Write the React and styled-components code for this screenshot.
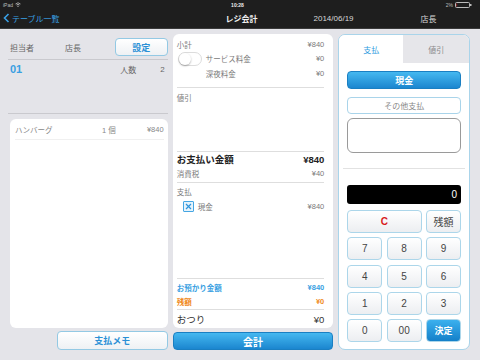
import React from "react";
import styled, { createGlobalStyle } from "styled-components";

const GlobalStyle = createGlobalStyle`
  html, body { margin: 0; padding: 0; }
  body {
    background: #e4e4e9;
    font-family: "Liberation Sans", "Noto Sans CJK JP", sans-serif;
  }
  * { box-sizing: border-box; }
`;

const Page = styled.div`
  width: 480px;
  height: 360px;
  display: flex;
  flex-direction: column;
  background: #e4e4e9;
  overflow: hidden;
`;

const StatusBar = styled.div`
  height: 9px;
  background: #1e1e1e;
  display: flex;
  align-items: center;
  padding: 0 8px 0 3px;
  font-size: 5px;
  color: #bbb;
`;

const StatusSide = styled.div`
  flex: 1;
  display: flex;
  align-items: center;
  gap: 2px;
  justify-content: ${(p) => (p.$right ? "flex-end" : "flex-start")};
`;

const Clock = styled.div`
  color: #eee;
  font-weight: bold;
  font-size: 5px;
`;

const NavBar = styled.div`
  height: 20px;
  background: #1e1e1e;
  display: grid;
  grid-template-columns: 1fr auto 1fr;
  align-items: center;
  padding: 0 0 1px 3px;
  border-bottom: 1px solid #3a3a3a;
`;

const BackLink = styled.div`
  display: flex;
  align-items: center;
  gap: 2px;
  color: #3aa1e6;
  font-size: 8px;
`;

const NavTitle = styled.div`
  color: #f2f2f2;
  font-size: 8px;
  font-weight: bold;
`;

const NavRight = styled.div`
  display: flex;
  align-items: center;
  color: #d8d8d8;
  font-size: 8px;
  padding-left: 56px;
  gap: 67px;
`;

const Main = styled.div`
  flex: 1;
  display: flex;
  padding: 5px 10px 10px 8px;
  gap: 5px;
`;

const LeftCol = styled.div`
  width: 160px;
  display: flex;
  flex-direction: column;
`;

const HeaderRow = styled.div`
  height: 26px;
  display: flex;
  align-items: center;
  padding: 1px 0 0 2px;
  border-bottom: 1px solid #c9c9ce;
  font-size: 8px;
  color: #666;
`;

const Cell = styled.span`
  width: ${(p) => p.$w || "auto"};
  flex: ${(p) => (p.$grow ? 1 : "none")};
  text-align: ${(p) => p.$align || "left"};
  color: ${(p) => p.$color || "inherit"};
  font-weight: ${(p) => (p.$bold ? "bold" : "normal")};
  font-size: ${(p) => p.$size || "inherit"};
  white-space: nowrap;
`;

const LightButton = styled.div`
  width: ${(p) => p.$w};
  height: ${(p) => p.$h};
  border: 1px solid #93c9e4;
  border-radius: 4px;
  background: linear-gradient(#ffffff, #eef1f4);
  color: #2a90d6;
  font-weight: bold;
  font-size: 9px;
  display: flex;
  align-items: center;
  justify-content: center;
  align-self: ${(p) => p.$align || "auto"};
  margin-top: ${(p) => p.$mt || "0"};
`;

const InfoRow = styled.div`
  height: 54px;
  padding: 0 3px 0 2px;
  border-bottom: 1px solid #c9c9ce;
  font-size: 8px;
  color: #666;
`;

const InfoLine = styled.div`
  height: 18px;
  display: flex;
  align-items: center;
`;

const ItemCard = styled.div`
  flex: 1;
  margin: 5px 0 0 2px;
  background: #fff;
  border-radius: 6px;
  padding: 0 4px 0 5px;
`;

const ItemRow = styled.div`
  height: 21px;
  display: flex;
  align-items: center;
  border-bottom: 1px solid #f0f0f0;
  font-size: 7.5px;
  color: #888;
`;

const MidCol = styled.div`
  width: 161px;
  display: flex;
  flex-direction: column;
`;

const Card = styled.div`
  flex: 1;
  background: #fff;
  border-radius: 6px;
  padding: 0 9px 0 4px;
  display: flex;
  flex-direction: column;
`;

const Section = styled.div`
  height: ${(p) => p.$h || "auto"};
  flex: ${(p) => (p.$grow ? 1 : "none")};
  padding-top: ${(p) => p.$pt || "0"};
  border-bottom: ${(p) => (p.$line ? "1px solid #dedede" : "none")};
  display: flex;
  flex-direction: column;
`;

const Row = styled.div`
  height: ${(p) => p.$h || "14px"};
  display: flex;
  align-items: center;
  padding-left: ${(p) => p.$indent || "0"};
  font-size: ${(p) => p.$size || "7.5px"};
  color: ${(p) => p.$color || "#7a7a7a"};
  font-weight: ${(p) => (p.$bold ? "bold" : "normal")};
`;

const RowLabel = styled.span`
  flex: 1;
  margin-left: ${(p) => p.$ml || "0"};
`;

const Toggle = styled.div`
  width: 24px;
  height: 14px;
  margin-left: 1px;
  border-radius: 7px;
  border: 1px solid #dcdcdc;
  background: #fff;
  position: relative;
  &::after {
    content: "";
    position: absolute;
    left: 0;
    top: 0;
    width: 12px;
    height: 12px;
    border-radius: 50%;
    background: #fff;
    box-shadow: 0 1px 2px rgba(0, 0, 0, 0.3);
  }
`;

const Check = styled.div`
  width: 11px;
  height: 11px;
  border: 1px solid #45a6e3;
  background: #e6f3fb;
  border-radius: 1px;
  display: flex;
  align-items: center;
  justify-content: center;
`;

const BlueButton = styled.div`
  height: ${(p) => p.$h || "18px"};
  margin-top: ${(p) => p.$mt || "0"};
  border-radius: 4px;
  background: linear-gradient(#45b8f0, #1b86cf);
  border: 1px solid #1a7fc2;
  color: #fff;
  font-weight: bold;
  font-size: ${(p) => p.$size || "9px"};
  display: flex;
  align-items: center;
  justify-content: center;
`;

const RightPanel = styled.div`
  width: 132px;
  background: #fff;
  border: 1px solid #a9d4ea;
  border-radius: 7px;
  overflow: hidden;
  display: flex;
  flex-direction: column;
`;

const Tabs = styled.div`
  height: 28px;
  display: flex;
`;

const Tab = styled.div`
  width: ${(p) => (p.$active ? "64px" : "auto")};
  flex: ${(p) => (p.$active ? "none" : 1)};
  background: ${(p) => (p.$active ? "#fff" : "#e6e6ea")};
  color: ${(p) => (p.$active ? "#2e9be0" : "#8a8a8a")};
  font-size: 8px;
  display: flex;
  align-items: center;
  justify-content: center;
`;

const PanelBody = styled.div`
  flex: 1;
  padding: 8px 8px 0 8px;
  display: flex;
  flex-direction: column;
`;

const OutlineButton = styled.div`
  height: 17px;
  margin-top: 8px;
  border: 1px solid #a9d4ea;
  border-radius: 4px;
  color: #888;
  font-size: 8px;
  display: flex;
  align-items: center;
  justify-content: center;
`;

const MemoBox = styled.div`
  height: 35px;
  margin-top: 4px;
  border: 1px solid #9a9a9a;
  border-radius: 6px;
`;

const Divider = styled.div`
  height: 1px;
  background: #e2e2e2;
  margin: 15px -4px 0 -4px;
`;

const Display = styled.div`
  height: 19px;
  margin-top: 16px;
  background: #000;
  border-radius: 3px;
  color: #fff;
  font-size: 10px;
  display: flex;
  align-items: center;
  justify-content: flex-end;
  padding-right: 4px;
`;

const Keypad = styled.div`
  margin-top: 6px;
  display: grid;
  grid-template-columns: repeat(3, 1fr);
  grid-auto-rows: 23px;
  column-gap: 4.5px;
  row-gap: 4.25px;
`;

const Key = styled.div`
  grid-column: span ${(p) => p.$span || 1};
  border: 1px solid #acd6ea;
  border-radius: 4px;
  background: ${(p) =>
    p.$primary ? "linear-gradient(#3bb0ee, #1480c9)" : "linear-gradient(#ffffff, #eceef1)"};
  color: ${(p) => (p.$primary ? "#fff" : p.$red ? "#d81b1b" : "#444")};
  font-size: ${(p) => (p.$primary ? "9px" : "10px")};
  font-weight: ${(p) => (p.$primary || p.$red ? "bold" : "normal")};
  display: flex;
  align-items: center;
  justify-content: center;
`;

const Wifi = () => (
  <svg width="6" height="5" viewBox="0 0 12 10">
    <path d="M1 4 Q6 -1 11 4" stroke="#bbb" strokeWidth="1.6" fill="none" />
    <path d="M3 6 Q6 3 9 6" stroke="#bbb" strokeWidth="1.6" fill="none" />
    <circle cx="6" cy="8.5" r="1.3" fill="#bbb" />
  </svg>
);

const Battery = () => (
  <svg width="17" height="6" viewBox="0 0 17 6">
    <rect x="0.5" y="0.5" width="14" height="5" rx="1" stroke="#bbb" fill="none" />
    <rect x="1.5" y="1.5" width="0.6" height="3" fill="#d33" />
    <rect x="15" y="2" width="1.5" height="2" fill="#bbb" />
  </svg>
);

const Chevron = () => (
  <svg width="7" height="10" viewBox="0 0 7 10">
    <path d="M5.5 1 L1.5 5 L5.5 9" stroke="#3aa1e6" strokeWidth="1.6" fill="none" />
  </svg>
);

const CrossMark = () => (
  <svg width="7" height="7" viewBox="0 0 7 7">
    <path d="M1 1 L6 6 M6 1 L1 6" stroke="#2f95dc" strokeWidth="1.2" />
  </svg>
);

export default function App() {
  const keys = ["7", "8", "9", "4", "5", "6", "1", "2", "3", "0", "00"];
  return (
    <Page>
      <GlobalStyle />
      <StatusBar>
        <StatusSide>
          <span>iPad</span>
          <Wifi />
        </StatusSide>
        <Clock>10:28</Clock>
        <StatusSide $right>
          <span>2%</span>
          <Battery />
        </StatusSide>
      </StatusBar>
      <NavBar>
        <BackLink>
          <Chevron />
          <span>テーブル一覧</span>
        </BackLink>
        <NavTitle>レジ会計</NavTitle>
        <NavRight>
          <span>2014/06/19</span>
          <span>店長</span>
        </NavRight>
      </NavBar>
      <Main>
        <LeftCol>
          <HeaderRow>
            <Cell $w="55px">担当者</Cell>
            <Cell $grow>店長</Cell>
            <LightButton $w="53px" $h="18px">設定</LightButton>
          </HeaderRow>
          <InfoRow>
            <InfoLine>
              <Cell $grow $color="#3a9fe2" $bold $size="11px">01</Cell>
              <Cell $w="40px">人数</Cell>
              <Cell>2</Cell>
            </InfoLine>
          </InfoRow>
          <ItemCard>
            <ItemRow>
              <Cell $grow>ハンバーグ</Cell>
              <Cell $w="45px">1 個</Cell>
              <Cell>¥840</Cell>
            </ItemRow>
          </ItemCard>
          <LightButton $w="111px" $h="19px" $align="flex-end" $mt="3px">
            支払メモ
          </LightButton>
        </LeftCol>
        <MidCol>
          <Card>
            <Section $h="54px" $pt="3px" $line>
              <Row>
                <RowLabel>小計</RowLabel>
                <span>¥840</span>
              </Row>
              <Row $h="15px">
                <Toggle />
                <RowLabel $ml="4px">サービス料金</RowLabel>
                <span>¥0</span>
              </Row>
              <Row $h="15px" $indent="29px">
                <RowLabel>深夜料金</RowLabel>
                <span>¥0</span>
              </Row>
            </Section>
            <Section $h="64px" $pt="2px" $line>
              <Row>
                <RowLabel>値引</RowLabel>
              </Row>
            </Section>
            <Section $h="31px" $line>
              <Row $size="9.5px" $color="#222" $bold>
                <RowLabel>お支払い金額</RowLabel>
                <span>¥840</span>
              </Row>
              <Row>
                <RowLabel>消費税</RowLabel>
                <span>¥40</span>
              </Row>
            </Section>
            <Section $grow $pt="1px" $line>
              <Row>
                <RowLabel>支払</RowLabel>
              </Row>
              <Row $h="17px" $indent="6px">
                <Check>
                  <CrossMark />
                </Check>
                <RowLabel $ml="4px">現金</RowLabel>
                <span>¥840</span>
              </Row>
            </Section>
            <Section $h="31px" $pt="1px" $line>
              <Row $color="#3a9fe2" $bold>
                <RowLabel>お預かり金額</RowLabel>
                <span>¥840</span>
              </Row>
              <Row $color="#f08a1c" $bold>
                <RowLabel>残額</RowLabel>
                <span>¥0</span>
              </Row>
            </Section>
            <Section $h="18px" $pt="1px">
              <Row $h="16px" $size="9.5px" $color="#333">
                <RowLabel>おつり</RowLabel>
                <span>¥0</span>
              </Row>
            </Section>
          </Card>
          <BlueButton $h="18px" $mt="4px" $size="10px">会計</BlueButton>
        </MidCol>
        <RightPanel>
          <Tabs>
            <Tab $active>支払</Tab>
            <Tab>値引</Tab>
          </Tabs>
          <PanelBody>
            <BlueButton $h="18px">現金</BlueButton>
            <OutlineButton>その他支払</OutlineButton>
            <MemoBox />
            <Divider />
            <Display>0</Display>
            <Keypad>
              <Key $span={2} $red>C</Key>
              <Key>残額</Key>
              {keys.map((k) => (
                <Key key={k}>{k}</Key>
              ))}
              <Key $primary>決定</Key>
            </Keypad>
          </PanelBody>
        </RightPanel>
      </Main>
    </Page>
  );
}
